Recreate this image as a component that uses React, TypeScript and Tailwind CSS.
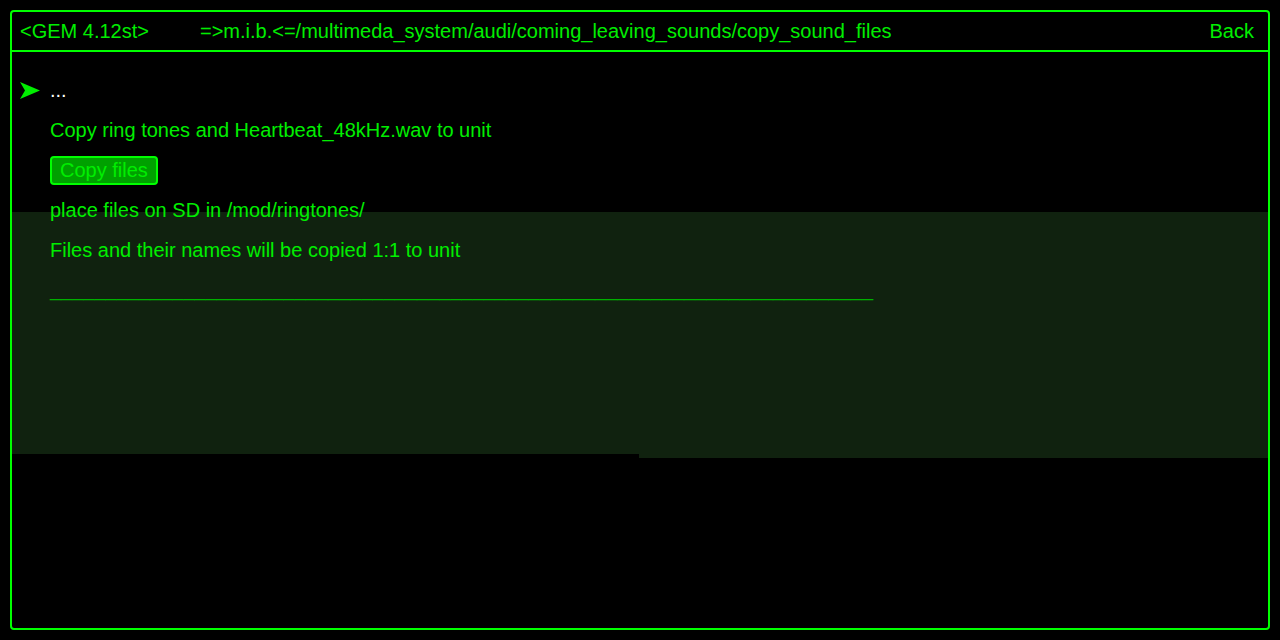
export default function App() {
  return (
    <div className="h-[640px] w-[1280px] bg-black p-[10px] font-['Liberation_Sans',Arial,sans-serif] text-[20px] text-[#00ee00]">
      <div className="relative flex h-[620px] flex-col rounded-[4px] border-2 border-[#00ff00]">
        <div className="absolute left-0 right-0 top-[200px] h-[242px] bg-[#10220f]" />
        <div className="absolute left-[627px] right-0 top-[442px] h-[4px] bg-[#10220f]" />
        <div className="flex h-[40px] shrink-0 items-center border-b-2 border-[#00ff00] px-[8px]">
          <span className="w-[180px]">&lt;GEM 4.12st&gt;</span>
          <span>=&gt;m.i.b.&lt;=/multimeda_system/audi/coming_leaving_sounds/copy_sound_files</span>
          <span className="ml-auto mr-[6px]">Back</span>
        </div>
        <div className="relative flex flex-col pt-[18px]">
          <div className="flex h-[40px] items-center">
            <svg className="ml-[8px] mr-[10px] h-[17px] w-[20px]" viewBox="0 0 20 17">
              <path d="M0 0 L20 8.5 L0 17 L5 8.5 Z" fill="#00ee00" />
            </svg>
            <span className="text-white">...</span>
          </div>
          <div className="flex h-[40px] items-center pl-[38px]">Copy ring tones and Heartbeat_48kHz.wav to unit</div>
          <div className="flex h-[40px] items-center pl-[38px]">
            <button className="flex h-[29px] items-center rounded-[4px] border-2 border-[#00ff00] bg-[#00a000] px-[8px] text-[#00ee00]">
              Copy files
            </button>
          </div>
          <div className="flex h-[40px] items-center pl-[38px]">place files on SD in /mod/ringtones/</div>
          <div className="flex h-[40px] items-center pl-[38px]">Files and their names will be copied 1:1 to unit</div>
          <div className="flex h-[38px] items-center pl-[38px] text-[#00b000]">
            __________________________________________________________________________
          </div>
        </div>
      </div>
    </div>
  );
}
